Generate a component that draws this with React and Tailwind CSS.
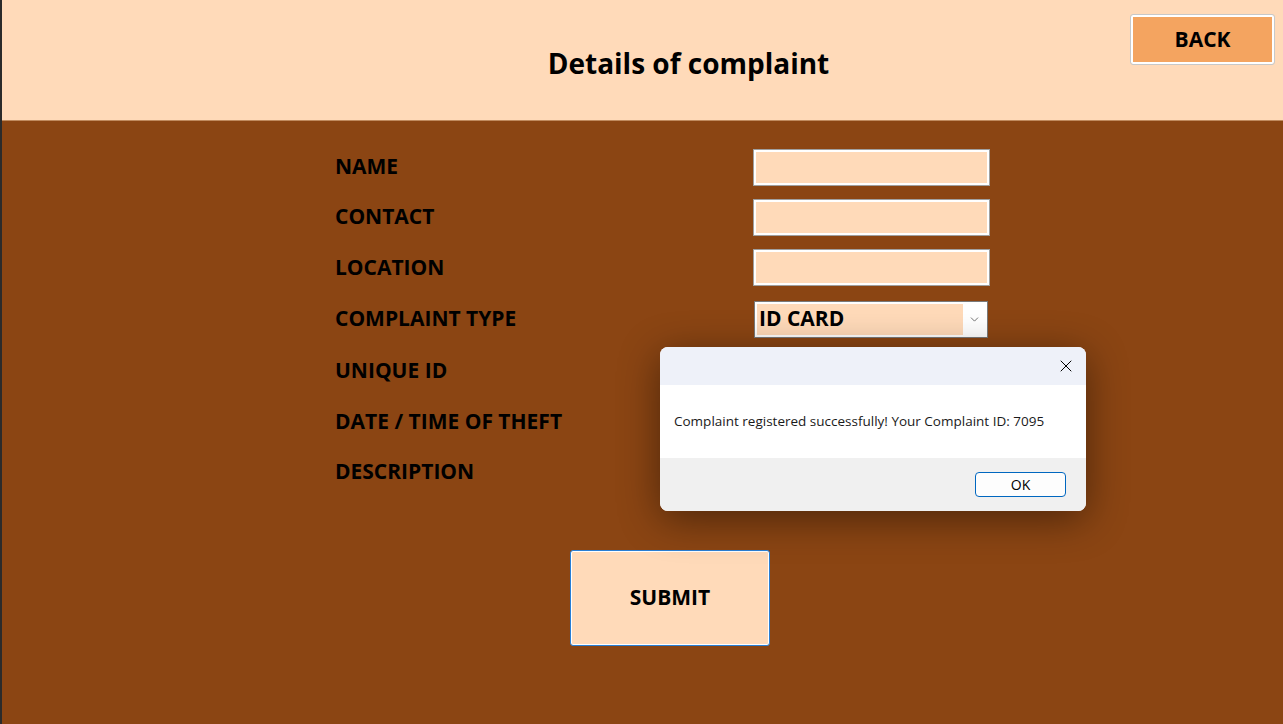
import { X, ChevronDown } from "lucide-react"

const fields = [
  { label: "NAME", input: "text", h: "h-[50px]" },
  { label: "CONTACT", input: "text", h: "h-[50px]" },
  { label: "LOCATION", input: "text", h: "h-[51px]" },
  { label: "COMPLAINT TYPE", input: "select", h: "h-[52px]" },
  { label: "UNIQUE ID", h: "h-[52px]" },
  { label: "DATE / TIME OF THEFT", h: "h-[50px]" },
  { label: "DESCRIPTION", h: "h-[50px]" },
]

function Field({ field }) {
  return (
    <div className={`flex items-center ${field.h}`}>
      <div className="w-[419px] text-[21px] font-bold text-black">{field.label}</div>
      {field.input === "text" && (
        <div className="w-[235px] h-[35px] bg-[#ffdab9] border-2 border-white outline outline-1 outline-[#a0a0a0]" />
      )}
      {field.input === "select" && (
        <div className="w-[234px] h-[37px] flex items-center bg-white border border-[#7a7a7a] p-[2px]">
          <div className="flex-1 h-full bg-[#ffdab9] flex items-center pl-[2px] text-[21px] font-bold text-black">
            ID CARD
          </div>
          <div className="w-[22px] flex justify-center text-[#555]">
            <ChevronDown size={13} strokeWidth={1.5} />
          </div>
        </div>
      )}
    </div>
  )
}

export default function App() {
  return (
    <div className="w-[1283px] h-[724px] flex overflow-hidden relative" style={{ fontFamily: '"Open Sans", "Noto Sans", sans-serif' }}>
      <div className="w-[2px] bg-[#2b2b2b]" />
      <div className="flex-1 flex flex-col">
        <header className="h-[121px] bg-[#ffdab9] border-b border-[#c08a5e] relative flex items-center justify-center">
          <h1 className="text-[28px] font-bold text-black pt-[5px] pl-[92px]">Details of complaint</h1>
          <button className="absolute right-[9px] top-[15px] w-[143px] h-[49px] bg-[#f4a460] border-2 border-white outline outline-1 outline-[#c8c8c8] rounded-[2px] text-[21px] font-bold text-black">
            BACK
          </button>
        </header>

        <main className="flex-1 bg-[#8b4513] flex flex-col">
          <div className="pl-[333px] pt-[21px]">
            {fields.map((f) => (
              <Field key={f.label} field={f} />
            ))}
          </div>
          <div className="pl-[568px] pt-[53px]">
            <button className="w-[200px] h-[96px] bg-[#ffdab9] border border-[#2a7fd4] rounded-[3px] shadow-[inset_0_0_0_1px_#ffffff] text-[21px] font-bold text-black">
              SUBMIT
            </button>
          </div>
        </main>
      </div>

      <div className="absolute left-[660px] top-[347px] w-[426px] h-[164px] rounded-[8px] overflow-hidden bg-white shadow-[0_8px_40px_rgba(0,0,0,0.45)] flex flex-col">
        <div className="h-[38px] bg-[#eef1f9] flex items-center justify-end pr-[10px]">
          <X size={20} strokeWidth={1.2} className="text-black" />
        </div>
        <div className="h-[73px] bg-white flex items-center pl-[14px] text-[13.5px] text-[#1a1a1a]">
          Complaint registered successfully! Your Complaint ID: 7095
        </div>
        <div className="flex-1 bg-[#f0f0f0] flex items-center justify-end pr-[20px]">
          <button className="w-[91px] h-[25px] bg-[#fdfdfd] border border-[#0067c0] rounded-[4px] text-[14px] text-black">
            OK
          </button>
        </div>
      </div>
    </div>
  )
}
